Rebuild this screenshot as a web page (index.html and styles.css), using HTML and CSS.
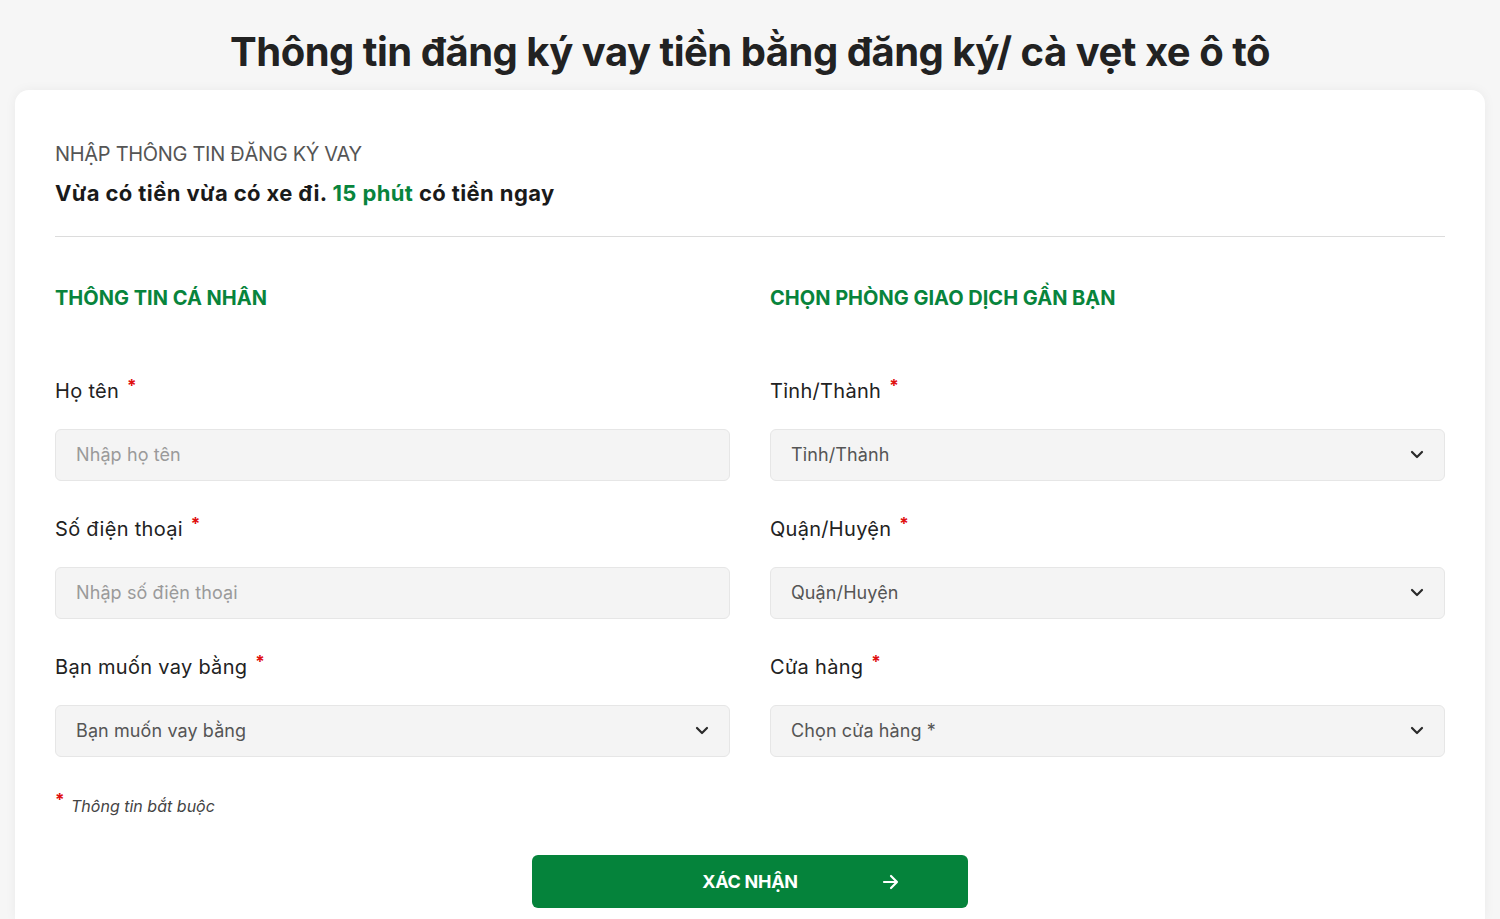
FILE: index.html
```html
<!DOCTYPE html>
<html lang="vi">
<head>
<meta charset="utf-8">
<title>Đăng ký vay</title>
<link rel="stylesheet" href="styles.css">
</head>
<body>
<h1 class="page-title">Thông tin đăng ký vay tiền bằng đăng ký/ cà vẹt xe ô tô</h1>
<main class="card">
  <p class="eyebrow">NHẬP THÔNG TIN ĐĂNG KÝ VAY</p>
  <p class="lead">Vừa có tiền vừa có xe đi. <span class="green">15 phút</span> có tiền ngay</p>
  <hr class="divider">
  <div class="columns">
    <section class="col">
      <h2 class="section-title">THÔNG TIN CÁ NHÂN</h2>
      <div class="fields">
        <div class="field">
          <label class="label">Họ tên <span class="req">*</span></label>
          <div class="control"><span class="placeholder">Nhập họ tên</span></div>
        </div>
        <div class="field">
          <label class="label">Số điện thoại <span class="req">*</span></label>
          <div class="control"><span class="placeholder">Nhập số điện thoại</span></div>
        </div>
        <div class="field">
          <label class="label">Bạn muốn vay bằng <span class="req">*</span></label>
          <div class="control select"><span class="value">Bạn muốn vay bằng</span>
            <svg class="chev" width="14" height="9" viewBox="0 0 14 9"><path d="M2 2l5 5 5-5" fill="none" stroke="#2a2a2a" stroke-width="2.2" stroke-linecap="round" stroke-linejoin="round"/></svg>
          </div>
        </div>
      </div>
    </section>
    <section class="col">
      <h2 class="section-title">CHỌN PHÒNG GIAO DỊCH GẦN BẠN</h2>
      <div class="fields">
        <div class="field">
          <label class="label">Tỉnh/Thành <span class="req">*</span></label>
          <div class="control select"><span class="value">Tỉnh/Thành</span>
            <svg class="chev" width="14" height="9" viewBox="0 0 14 9"><path d="M2 2l5 5 5-5" fill="none" stroke="#2a2a2a" stroke-width="2.2" stroke-linecap="round" stroke-linejoin="round"/></svg>
          </div>
        </div>
        <div class="field">
          <label class="label">Quận/Huyện <span class="req">*</span></label>
          <div class="control select"><span class="value">Quận/Huyện</span>
            <svg class="chev" width="14" height="9" viewBox="0 0 14 9"><path d="M2 2l5 5 5-5" fill="none" stroke="#2a2a2a" stroke-width="2.2" stroke-linecap="round" stroke-linejoin="round"/></svg>
          </div>
        </div>
        <div class="field">
          <label class="label">Cửa hàng <span class="req">*</span></label>
          <div class="control select"><span class="value">Chọn cửa hàng *</span>
            <svg class="chev" width="14" height="9" viewBox="0 0 14 9"><path d="M2 2l5 5 5-5" fill="none" stroke="#2a2a2a" stroke-width="2.2" stroke-linecap="round" stroke-linejoin="round"/></svg>
          </div>
        </div>
      </div>
    </section>
  </div>
  <p class="note"><span class="req">*</span> Thông tin bắt buộc</p>
  <div class="actions">
    <button class="submit" type="button">XÁC NHẬN
      <svg class="arrow" width="18" height="16" viewBox="0 0 18 16"><path d="M2 8h13M9 2l6 6-6 6" fill="none" stroke="#fff" stroke-width="2.2" stroke-linecap="round" stroke-linejoin="round"/></svg>
    </button>
  </div>
</main>
</body>
</html>
```
FILE: styles.css
```css
* { box-sizing: border-box; }
html, body { margin: 0; padding: 0; }
body {
  background: #f6f6f6;
  font-family: "Inter", "Noto Sans", sans-serif;
  color: #222;
  overflow: hidden;
}
.page-title {
  margin: 27px 0 13px;
  font-size: 40px;
  line-height: 50px;
  font-weight: 700;
  text-align: center;
  color: #222;
  letter-spacing: -0.5px;
}
.card {
  margin: 0 15px;
  background: #fff;
  border-radius: 14px 14px 0 0;
  box-shadow: 0 0 12px rgba(0,0,0,0.05);
  padding: 50px 40px 11px;
}
.eyebrow {
  margin: 0;
  font-size: 20px;
  line-height: 28px;
  color: #555;
  letter-spacing: -0.3px;
}
.lead {
  margin: 10px 0 0;
  font-size: 22px;
  line-height: 30px;
  font-weight: 700;
  color: #1a1a1a;
  letter-spacing: 0.4px;
}
.green { color: #08843c; }
.divider {
  margin: 28px 0 0;
  border: 0;
  border-top: 1px solid #dcdcdc;
}
.columns {
  display: grid;
  grid-template-columns: 1fr 1fr;
  gap: 40px;
}
.section-title {
  margin: 47px 0 0;
  font-size: 20px;
  line-height: 28px;
  font-weight: 700;
  color: #08843c;
  letter-spacing: 0;
}
.fields {
  margin-top: 65px;
  display: flex;
  flex-direction: column;
  gap: 34px;
}
.field {
  display: flex;
  flex-direction: column;
  gap: 24px;
}
.label {
  font-size: 20px;
  line-height: 28px;
  color: #222;
  letter-spacing: 0.3px;
}
.req {
  color: #e01010;
  font-size: 17px;
  font-weight: 700;
  line-height: 0;
  vertical-align: 6px;
  margin-left: 2px;
}
.control {
  height: 52px;
  background: #f4f4f4;
  border: 1px solid #e6e6e6;
  border-radius: 6px;
  padding: 0 20px 2px;
  display: flex;
  align-items: center;
  justify-content: space-between;
  font-size: 18px;
  letter-spacing: 0.1px;
}
.placeholder { color: #9a9a9a; }
.value { color: #555; }
.note {
  margin: 38px 0 0;
  font-size: 16px;
  line-height: 22px;
  font-style: italic;
  color: #444;
}
.note .req { font-style: normal; margin-left: 0; margin-right: 2px; }
.actions {
  margin-top: 38px;
  display: flex;
  justify-content: center;
}
.submit {
  position: relative;
  width: 436px;
  height: 53px;
  border: 0;
  border-radius: 6px;
  background: #05833b;
  color: #fff;
  font-family: inherit;
  font-size: 18px;
  font-weight: 700;
  letter-spacing: -0.3px;
  cursor: pointer;
}
.arrow {
  position: absolute;
  right: 68px;
  top: 50%;
  transform: translateY(-50%);
}
```
